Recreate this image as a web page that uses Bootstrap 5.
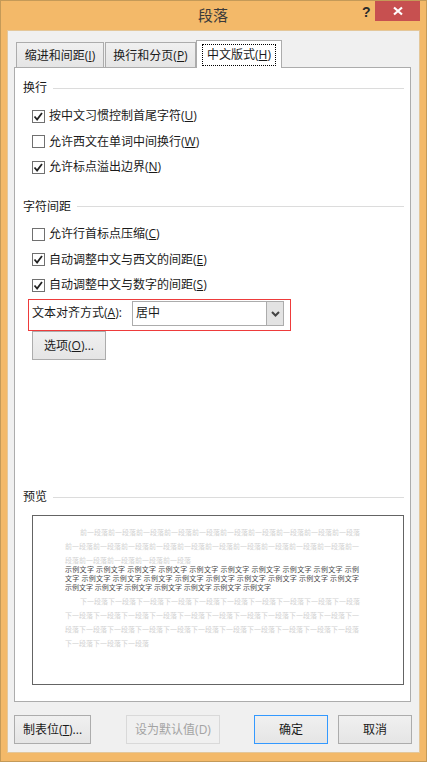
<!DOCTYPE html>
<html lang="zh-CN">
<head>
<meta charset="utf-8">
<title>段落</title>
<link href="https://cdn.jsdelivr.net/npm/bootstrap@5.3.0/dist/css/bootstrap.min.css" rel="stylesheet">
<style>
html,body{height:762px;overflow:hidden;margin:0}
body{background:#f3b969;font-family:"Open Sans","Noto Sans CJK SC",sans-serif;font-size:12px;line-height:16px;color:#1a1a1a}
u{text-underline-offset:1px;text-decoration-thickness:1px}
.dlg{width:427px;height:762px;border:1px solid #c49a58}
.titlebar{height:29px;position:relative}
.ttl{font-size:15px;line-height:29px;color:#3a3a3a;margin-left:-1px}
.help{position:absolute;left:361px;top:1px;font:700 14px/20px "Liberation Sans",sans-serif;color:#2b2b2b}
.closex{position:absolute;left:374px;top:0;width:45px;height:20px;background:#c75050}
.client{width:413px;height:723px;margin-left:6px;background:#f0f0f0;border:1px solid #e4c79a;padding:9px 0 0 6px}
.tabstrip{height:27px;margin-left:2px;align-items:flex-end;position:relative;z-index:1}
.tb{height:25px;border:1px solid #acacac;border-bottom:0;background:linear-gradient(#f0f0f0,#e5e5e5);line-height:24px;padding-top:1px;text-align:center}
.tb1{width:88px}
.tb2{width:91px;margin-left:1px}
.tb3{width:86px;height:28px;background:#fff;margin-bottom:-1px;padding:3px 5px 0}
.tfocus{height:22px;border:1px dotted #000;line-height:20px}
.panel{width:397px;height:635px;background:#fff;border:1px solid #acacac;padding:12px 6px 0 8px}
.sect{height:16px;gap:6px}
.sect hr{flex:1;margin:0;border:0;border-top:1px solid #dcdcdc;opacity:1}
.rows{padding-left:9px}
.chk{height:25.5px;gap:4px}
.chk .form-check-input{width:13px;height:13px;margin:0;flex:none;border:1px solid #707070;border-radius:0;background-color:#fff}
.chk .form-check-input:checked{background-color:#fff;border-color:#707070;background-image:url("data:image/svg+xml,%3Csvg xmlns='http://www.w3.org/2000/svg' viewBox='0 0 13 13'%3E%3Cpath d='M2.5 6.5l2.6 3L10 3' fill='none' stroke='%23222' stroke-width='1.8'/%3E%3C/svg%3E");background-size:13px 13px}
.r1{margin-top:7.5px}
.s2{margin-top:18.5px}
.r2{margin-top:7px}
.redbox{width:263px;height:32px;margin:1px 0 0 5px;border:1px solid #ee3b3b;padding:1px 0 0 3px;gap:8px}
.lbl{width:92px;white-space:nowrap}
.combo{width:152px;height:25px;border:1px solid #acacac;background:#fff;padding-left:3px;line-height:22px}
.arr{width:17px;height:23px;background:#e3e3e3;border-left:1px solid #acacac}
.bt{height:29px;padding:0;border:1px solid #acacac;border-radius:0;background:linear-gradient(#f0f0f0,#e5e5e5);font-size:12px;line-height:16px;color:#1a1a1a}
.opt{width:74px;margin:0 0 0 9px;display:block}
.s3{margin-top:129px}
.pv{width:372px;height:170px;margin:10px 0 0 9px;border:1px solid #646464;padding:9px 0 0 32px;font-family:"Noto Sans CJK SC",sans-serif;font-size:7px;color:#d2d2d2}
.pl{height:14px;line-height:14px;white-space:nowrap;width:294px}
.ind{padding-left:15px}
.sm{height:9px;line-height:9px;color:#4a4a4a;text-align:justify;text-align-last:justify;text-justify:inter-word}
.sm.last{text-align-last:left;word-spacing:.1px}
.sm.top{margin-top:-2px}
.sm.last+.pl{margin-top:2px}
.foot{padding:13px 0 0 0;width:399px}
.b1{width:77px}.b2{width:94px;margin-left:35px}.b3{width:74px;margin-left:34px}.b4{width:74px;margin-left:10px}
.b2:disabled{opacity:1;border-color:#d9d9d9;color:#a3a3a3;background:#f0f0f0}
.b3{border-color:#3399ff}
</style>
</head>
<body>
<div class="dlg">
  <div class="titlebar text-center">
    <div class="ttl">段落</div>
    <div class="help">?</div>
    <div class="closex d-flex align-items-center justify-content-center">
      <svg width="12" height="10" viewBox="0 0 12 10"><path d="M2 1.5l8 7M10 1.5l-8 7" stroke="#fff" stroke-width="2.2" fill="none"/></svg>
    </div>
  </div>
  <div class="client">
    <div class="tabstrip d-flex">
      <div class="tb tb1">缩进和间距(<u>I</u>)</div>
      <div class="tb tb2">换行和分页(<u>P</u>)</div>
      <div class="tb tb3"><div class="tfocus">中文版式(<u>H</u>)</div></div>
    </div>
    <div class="panel">
      <div class="sect d-flex align-items-center"><span>换行</span><hr></div>
      <div class="rows r1">
        <label class="chk d-flex align-items-center"><input class="form-check-input" type="checkbox" checked><span>按中文习惯控制首尾字符(<u>U</u>)</span></label>
        <label class="chk d-flex align-items-center"><input class="form-check-input" type="checkbox"><span>允许西文在单词中间换行(<u>W</u>)</span></label>
        <label class="chk d-flex align-items-center"><input class="form-check-input" type="checkbox" checked><span>允许标点溢出边界(<u>N</u>)</span></label>
      </div>
      <div class="sect s2 d-flex align-items-center"><span>字符间距</span><hr></div>
      <div class="rows r2">
        <label class="chk d-flex align-items-center"><input class="form-check-input" type="checkbox"><span>允许行首标点压缩(<u>C</u>)</span></label>
        <label class="chk d-flex align-items-center"><input class="form-check-input" type="checkbox" checked><span>自动调整中文与西文的间距(<u>E</u>)</span></label>
        <label class="chk d-flex align-items-center"><input class="form-check-input" type="checkbox" checked><span>自动调整中文与数字的间距(<u>S</u>)</span></label>
      </div>
      <div class="redbox d-flex align-items-start">
        <span class="lbl pt-1">文本对齐方式(<u>A</u>):</span>
        <div class="combo d-flex justify-content-between"><span>居中</span>
          <span class="arr d-flex align-items-center justify-content-center"><svg width="9" height="6" viewBox="0 0 9 6"><path d="M1 1l3.5 3.5L8 1" stroke="#444" stroke-width="2" fill="none"/></svg></span>
        </div>
      </div>
      <button type="button" class="btn bt opt">选项(<u>O</u>)...</button>
      <div class="sect s3 d-flex align-items-center"><span>预览</span><hr></div>
      <div class="pv">
        <div class="pl ind">前一段落前一段落前一段落前一段落前一段落前一段落前一段落前一段落前一段落前一段落</div>
        <div class="pl">前一段落前一段落前一段落前一段落前一段落前一段落前一段落前一段落前一段落前一段落前一</div>
        <div class="pl">段落前一段落前一段落前一段落前一段落</div>
        <div class="pl sm top">示例文字 示例文字 示例文字 示例文字 示例文字 示例文字 示例文字 示例文字 示例文字 示例</div>
        <div class="pl sm">文字 示例文字 示例文字 示例文字 示例文字 示例文字 示例文字 示例文字 示例文字 示例文字</div>
        <div class="pl sm last">示例文字 示例文字 示例文字 示例文字 示例文字 示例文字 示例文字</div>
        <div class="pl ind">下一段落下一段落下一段落下一段落下一段落下一段落下一段落下一段落下一段落下一段落</div>
        <div class="pl">下一段落下一段落下一段落下一段落下一段落下一段落下一段落下一段落下一段落下一段落下一</div>
        <div class="pl">段落下一段落下一段落下一段落下一段落下一段落下一段落下一段落下一段落下一段落下一段落</div>
        <div class="pl">下一段落下一段落下一段落</div>
      </div>
    </div>
    <div class="foot d-flex">
      <button type="button" class="btn bt b1">制表位(<u>T</u>)...</button>
      <button type="button" class="btn bt b2" disabled>设为默认值(D)</button>
      <button type="button" class="btn bt b3">确定</button>
      <button type="button" class="btn bt b4">取消</button>
    </div>
  </div>
</div>
</body>
</html>
